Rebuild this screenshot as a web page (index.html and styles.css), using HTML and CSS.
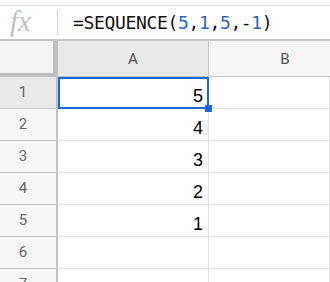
FILE: index.html
```html
<!DOCTYPE html>
<html>
<head>
<meta charset="utf-8">
<link rel="stylesheet" href="styles.css">
</head>
<body>
<div class="topgap"></div>
<div class="fbar">
  <span class="fx">fx</span>
  <span class="sep"></span>
  <span class="formula">=SEQUENCE(<span class="num">5</span>,<span class="num">1</span>,<span class="num">5</span>,-<span class="num">1</span>)</span>
</div>
<div class="grid">
  <div class="corner"></div>
  <div class="colhead sel">A</div>
  <div class="colhead last">B</div>

  <div class="rowhead sel">1</div>
  <div class="cell active">5<span class="handle"></span></div>
  <div class="cell"></div>

  <div class="rowhead">2</div>
  <div class="cell">4</div>
  <div class="cell"></div>

  <div class="rowhead">3</div>
  <div class="cell">3</div>
  <div class="cell"></div>

  <div class="rowhead">4</div>
  <div class="cell">2</div>
  <div class="cell"></div>

  <div class="rowhead">5</div>
  <div class="cell">1</div>
  <div class="cell"></div>

  <div class="rowhead">6</div>
  <div class="cell"></div>
  <div class="cell"></div>

  <div class="rowhead">7</div>
  <div class="cell"></div>
  <div class="cell"></div>
</div>
</body>
</html>
```

FILE: styles.css
```css
html, body {
  margin: 0;
  padding: 0;
  background: #fff;
  overflow: hidden;
  width: 330px;
  height: 282px;
}
.topgap {
  height: 5px;
}
.fbar {
  border-top: 1px solid #e1e1e1;
  border-bottom: 2px solid #c6c6c6;
  height: 33px;
  display: flex;
  align-items: center;
}
.fx {
  font-family: "Liberation Serif", serif;
  font-style: italic;
  font-size: 29px;
  color: #c2c2c2;
  width: 57px;
  padding-left: 10px;
  box-sizing: border-box;
  line-height: 1;
  margin-top: -2px;
}
.sep {
  width: 1px;
  height: 25px;
  background: #d0d0d0;
}
.formula {
  margin-left: 15px;
  font-family: "DejaVu Sans Mono", monospace;
  font-size: 18px;
  letter-spacing: -0.35px;
  color: #111;
}
.num {
  color: #2f63c2;
}
.grid {
  display: grid;
  grid-template-columns: 58px 151px 1fr;
  grid-template-rows: 36px repeat(6, 32px) 14px;
  font-family: Roboto, "Liberation Sans", sans-serif;
}
.corner {
  background: #f3f3f3;
  border-right: 5px solid #c0c0c0;
  border-bottom: 4px solid #c0c0c0;
  box-sizing: border-box;
}
.colhead {
  background: #f6f6f6;
  border-right: 1px solid #c8c8c8;
  border-bottom: 1px solid #c0c0c0;
  box-sizing: border-box;
  display: flex;
  align-items: center;
  justify-content: center;
  font-size: 15px;
  color: #555;
  padding-top: 1px;
}
.colhead.sel {
  background: #e9e9e9;
}
.colhead.last {
  border-right: none;
  padding-left: 31px;
}
.rowhead {
  background: #f6f6f6;
  border-right: 2px solid #c0c0c0;
  border-bottom: 1px solid #c8c8c8;
  box-sizing: border-box;
  display: flex;
  align-items: flex-start;
  justify-content: center;
  padding: 7px 10px 0 0;
  font-size: 15px;
  line-height: 17px;
  color: #666;
  overflow: hidden;
}
.rowhead.sel {
  background: #e9e9e9;
}
.cell {
  border-right: 1px solid #e2e2e2;
  border-bottom: 1px solid #e2e2e2;
  box-sizing: border-box;
  display: flex;
  align-items: flex-end;
  justify-content: flex-end;
  padding: 0 5px 3px 0;
  font-family: "Liberation Sans", Arial, sans-serif;
  font-size: 18px;
  line-height: 1;
  color: #000;
}
.cell.active {
  position: relative;
}
.cell.active::after {
  content: "";
  position: absolute;
  left: 0;
  top: 0;
  right: -1px;
  bottom: -1px;
  border: 2px solid #1a6ad6;
}
.handle {
  position: absolute;
  right: -4px;
  bottom: -4px;
  width: 7px;
  height: 7px;
  background: #1a6ad6;
  z-index: 2;
}
```
